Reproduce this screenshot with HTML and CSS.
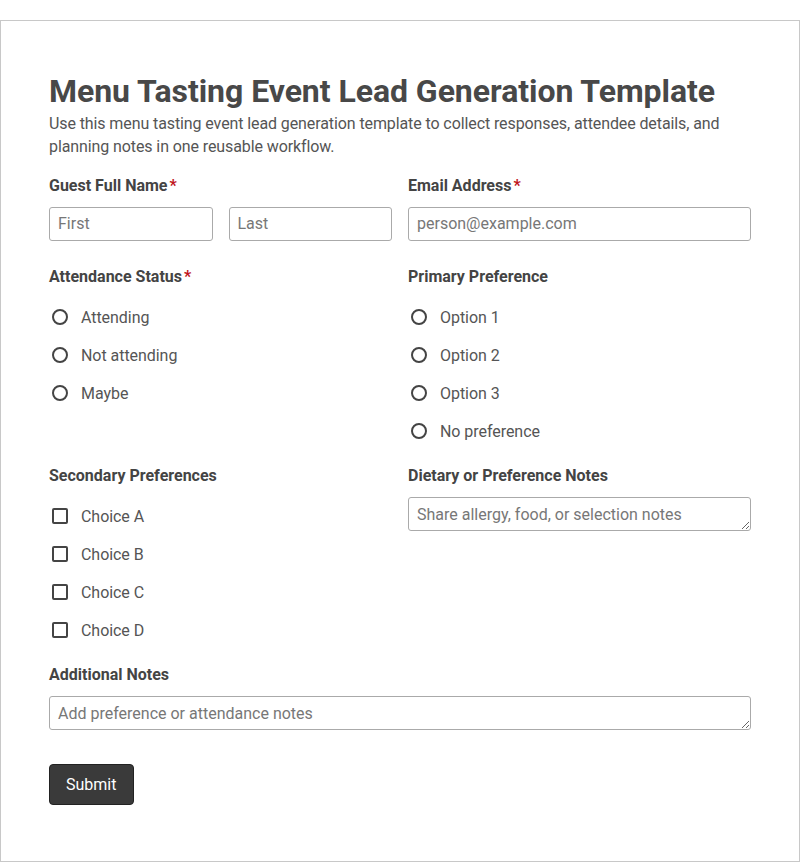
FILE: index.html
```html
<!DOCTYPE html>
<html>
<head>
  <title>Menu Tasting Event Lead Generation Template</title>
  <link rel="stylesheet" href="styles.css">
</head>
<body>
<div class="form-container">
  <h1 class="form-title">Menu Tasting Event Lead Generation Template</h1>
  <p class="form-description">Use this menu tasting event lead generation template to collect responses, attendee details, and planning notes in one reusable workflow.</p>

  <form class="form-grid">
    <div class="field">
      <label class="field-label">Guest Full Name<span class="required">*</span></label>
      <div class="name-row">
        <input type="text" placeholder="First">
        <input type="text" placeholder="Last">
      </div>
    </div>

    <div class="field">
      <label class="field-label" for="email">Email Address<span class="required">*</span></label>
      <input type="text" id="email" placeholder="person@example.com">
    </div>

    <div class="field">
      <span class="field-label">Attendance Status<span class="required">*</span></span>
      <div class="options">
        <label class="option"><input type="radio" name="attendance"> Attending</label>
        <label class="option"><input type="radio" name="attendance"> Not attending</label>
        <label class="option"><input type="radio" name="attendance"> Maybe</label>
      </div>
    </div>

    <div class="field">
      <span class="field-label">Primary Preference</span>
      <div class="options">
        <label class="option"><input type="radio" name="primary"> Option 1</label>
        <label class="option"><input type="radio" name="primary"> Option 2</label>
        <label class="option"><input type="radio" name="primary"> Option 3</label>
        <label class="option"><input type="radio" name="primary"> No preference</label>
      </div>
    </div>

    <div class="field">
      <span class="field-label">Secondary Preferences</span>
      <div class="options">
        <label class="option"><input type="checkbox"> Choice A</label>
        <label class="option"><input type="checkbox"> Choice B</label>
        <label class="option"><input type="checkbox"> Choice C</label>
        <label class="option"><input type="checkbox"> Choice D</label>
      </div>
    </div>

    <div class="field">
      <label class="field-label" for="dietary">Dietary or Preference Notes</label>
      <textarea id="dietary" rows="1" placeholder="Share allergy, food, or selection notes"></textarea>
    </div>

    <div class="field field-wide">
      <label class="field-label" for="notes">Additional Notes</label>
      <textarea id="notes" rows="1" placeholder="Add preference or attendance notes"></textarea>
    </div>

    <div class="field-wide">
      <button type="button" class="submit-button">Submit</button>
    </div>
  </form>
</div>
</body>
</html>
```

FILE: styles.css
```css
body {
  margin: 0;
  padding-top: 20px;
  font-family: Roboto, "Liberation Sans", sans-serif;
  color: #444;
  background-color: #ffffff;
}

.form-container {
  border: 1px solid #c8c8c8;
  padding: 51px 48px 56px 48px;
}

.form-title {
  margin: 0;
  font-size: 32px;
  line-height: 38px;
  font-weight: 700;
  letter-spacing: -0.05px;
  color: #484848;
}

.form-description {
  margin: 2px 0 16px 0;
  font-size: 16px;
  line-height: 23px;
  letter-spacing: -0.1px;
  color: #555;
}

.form-grid {
  display: grid;
  grid-template-columns: 1fr 1fr;
  column-gap: 16px;
  row-gap: 14px;
}

.field-wide {
  grid-column: 1 / 3;
}

.field-label {
  display: block;
  margin-bottom: 10px;
  padding-top: 1px;
  font-size: 16px;
  line-height: 22px;
  font-weight: 700;
  color: #444;
}

.required {
  color: #c0141c;
  margin-left: 2px;
}

.name-row {
  display: flex;
  gap: 16px;
}

input[type="text"], textarea {
  box-sizing: border-box;
  width: 100%;
  height: 34px;
  margin: 0 0 10px 0;
  padding: 6px 8px;
  border: 1px solid #aaa;
  border-radius: 3px;
  font-family: Roboto, "Liberation Sans", sans-serif;
  font-size: 16px;
  line-height: 20px;
  color: #444;
  background-color: #fff;
}

input[type="text"] {
  padding: 5px 8px 7px 8px;
}

textarea {
  display: block;
  padding: 7px 8px 5px 8px;
  resize: vertical;
}

input::placeholder, textarea::placeholder {
  color: #777;
}

.options {
  display: flex;
  flex-direction: column;
}

.option {
  display: flex;
  align-items: center;
  height: 38px;
  font-size: 16px;
  letter-spacing: -0.05px;
  color: #555;
}

.option input {
  appearance: none;
  box-sizing: border-box;
  width: 16px;
  height: 16px;
  margin: 0 13px 0 3px;
  border: 2px solid #444;
  background-color: #fff;
}

.option input[type="radio"] {
  border-radius: 50%;
}

.option input[type="checkbox"] {
  border-radius: 2px;
}

.submit-button {
  margin-top: 10px;
  padding: 10px 17px 10px 16px;
  border: 1px solid #222;
  border-radius: 4px;
  background-color: #3a3a3a;
  color: white;
  font-family: Roboto, "Liberation Sans", sans-serif;
  font-size: 16px;
  line-height: 19px;
  cursor: pointer;
}
```
